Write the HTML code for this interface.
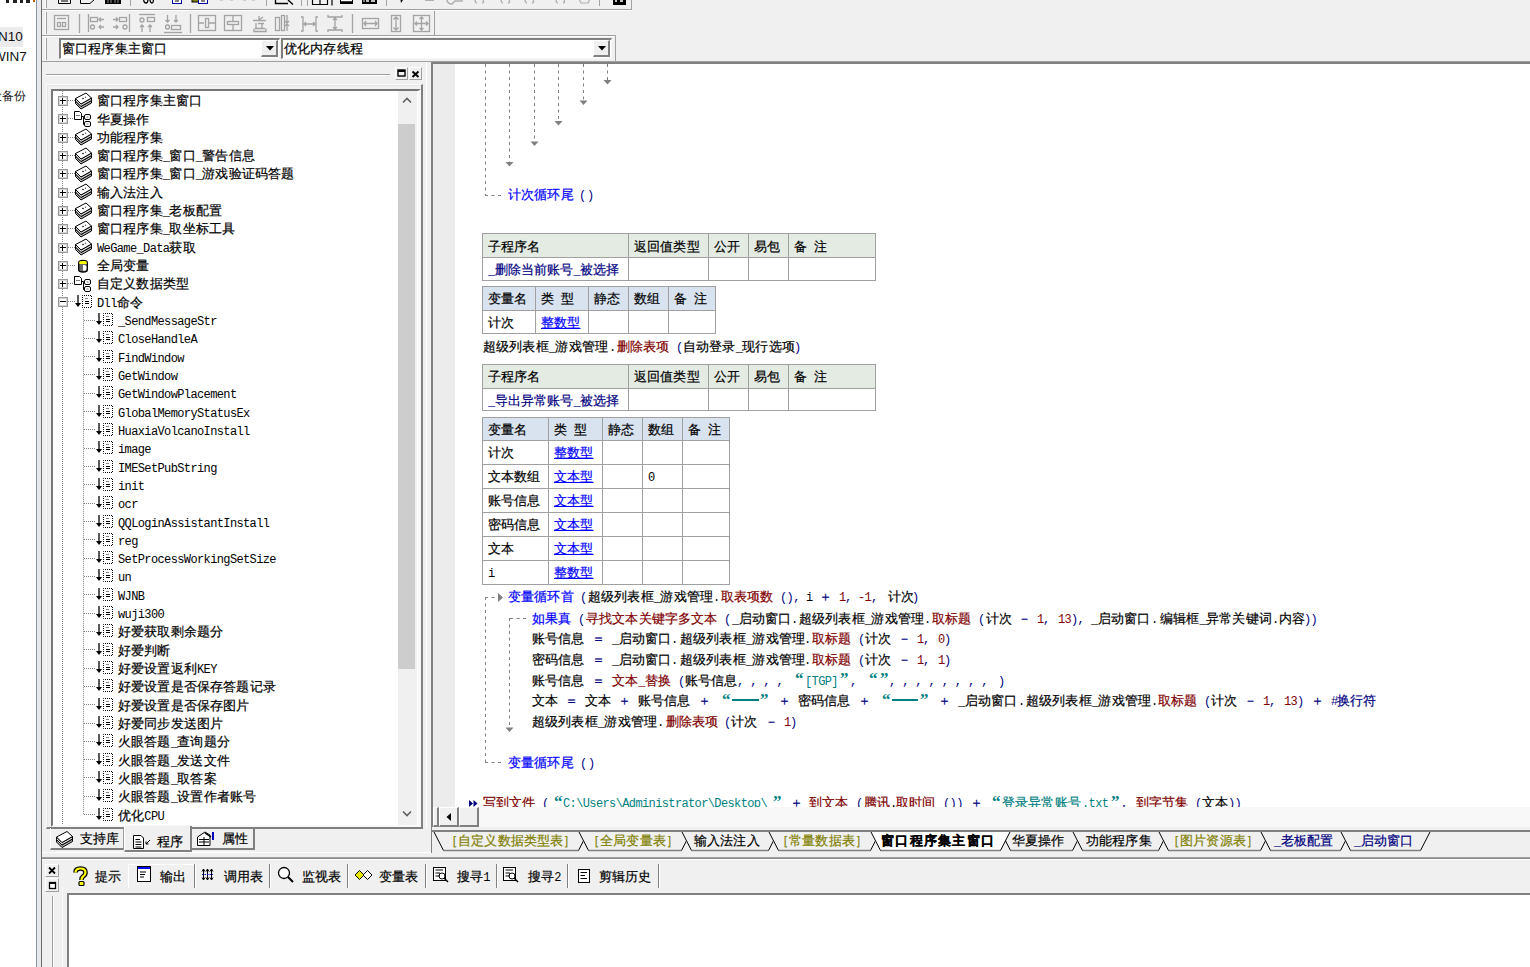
<!DOCTYPE html><html><head><meta charset="utf-8"><style>
*{margin:0;padding:0;box-sizing:border-box}
html,body{width:1530px;height:967px;overflow:hidden;background:#f0f0f0}
body{position:relative;font-family:"Liberation Sans",sans-serif;font-size:13px}
body div{position:absolute}
.t{white-space:pre;line-height:13px;font-size:13px;letter-spacing:0.16px;-webkit-text-stroke:0.2px currentColor}
.t i{font-style:normal;font-family:"Liberation Mono",monospace;font-size:12px;letter-spacing:-0.62px;-webkit-text-stroke:0}
.c{}
svg{position:absolute;overflow:visible}
</style></head><body><div style="left:0px;top:0px;width:36px;height:967px;background:#fff"></div>
<div style="left:0px;top:27px;width:23px;height:20px;background:#ebebeb"></div>
<div style="left:-2px;top:27px;font:13.5px/20px 'Liberation Sans';color:#111">N10</div>
<div style="left:-7px;top:47px;font:13.5px/20px 'Liberation Sans';color:#111">WIN7</div>
<div style="left:-10px;top:90px;font:12px/12px 'Liberation Sans';color:#111">设备份</div>
<div style="left:6px;top:0px;width:3px;height:3px;background:#222"></div>
<div style="left:13px;top:0px;width:4px;height:3px;background:#222"></div>
<div style="left:20px;top:0px;width:3px;height:3px;background:#222"></div>
<div style="left:26px;top:0px;width:4px;height:3px;background:#222"></div>
<div style="left:33px;top:0px;width:2px;height:2px;background:#c06000"></div>
<div style="left:36px;top:0px;width:1px;height:967px;background:#8a94a0"></div>
<div style="left:37px;top:0px;width:4px;height:967px;background:#e6e8eb"></div>
<div style="left:41px;top:0px;width:1px;height:967px;background:#6e6e6e"></div>
<div style="left:42px;top:9px;width:590px;height:1px;background:#a0a0a0"></div>
<div style="left:42px;top:10px;width:590px;height:1px;background:#fff"></div>
<div style="left:631px;top:0px;width:1px;height:10px;background:#a0a0a0"></div>
<div style="left:42px;top:35px;width:574px;height:1px;background:#a0a0a0"></div>
<div style="left:42px;top:36px;width:574px;height:1px;background:#fff"></div>
<div style="left:434px;top:11px;width:1px;height:25px;background:#a0a0a0"></div>
<div style="left:42px;top:61px;width:1488px;height:1px;background:#a0a0a0"></div>
<div style="left:615px;top:36px;width:1px;height:26px;background:#a0a0a0"></div>
<div style="left:45px;top:0px;width:1px;height:8px;background:#fff"></div>
<div style="left:46px;top:0px;width:1px;height:8px;background:#a0a0a0"></div>
<div style="left:45px;top:12px;width:1px;height:22px;background:#fff"></div>
<div style="left:46px;top:12px;width:1px;height:22px;background:#a0a0a0"></div>
<div style="left:45px;top:38px;width:1px;height:22px;background:#fff"></div>
<div style="left:46px;top:38px;width:1px;height:22px;background:#a0a0a0"></div>
<div style="left:59px;top:38px;width:221px;height:21px;background:#fff;border-top:2px solid #808080;border-left:2px solid #808080;border-bottom:1px solid #f8f8f8;border-right:1px solid #f8f8f8"></div>
<div style="left:261px;top:40px;width:17px;height:17px;background:#f0f0f0;border-right:2px solid #808080;border-bottom:2px solid #808080;border-top:1px solid #fff;border-left:1px solid #fff"></div>
<svg style="left:266px;top:46px" width="8" height="5"><path d="M0 0H8L4 4.5Z" fill="#000"/></svg>
<div class="t" style="left:62px;top:42px;color:#000;">窗口程序集主窗口</div>
<div style="left:281px;top:38px;width:331px;height:21px;background:#fff;border-top:2px solid #808080;border-left:2px solid #808080;border-bottom:1px solid #f8f8f8;border-right:1px solid #f8f8f8"></div>
<div style="left:593px;top:40px;width:17px;height:17px;background:#f0f0f0;border-right:2px solid #808080;border-bottom:2px solid #808080;border-top:1px solid #fff;border-left:1px solid #fff"></div>
<svg style="left:598px;top:46px" width="8" height="5"><path d="M0 0H8L4 4.5Z" fill="#000"/></svg>
<div class="t" style="left:284px;top:42px;color:#000;">优化内存线程</div>
<div style="left:46px;top:74px;width:344px;height:1px;background:#a0a0a0"></div>
<div style="left:46px;top:75px;width:344px;height:1px;background:#fff"></div>
<div style="left:395px;top:67px;width:13px;height:13px;border-right:1px solid #a0a0a0;border-bottom:1px solid #a0a0a0;border-top:1px solid #fff;border-left:1px solid #fff"></div>
<div style="left:409px;top:67px;width:13px;height:13px;border-right:1px solid #a0a0a0;border-bottom:1px solid #a0a0a0;border-top:1px solid #fff;border-left:1px solid #fff"></div>
<svg style="left:397px;top:69px" width="9" height="9"><rect x="1" y="1" width="7" height="6" fill="none" stroke="#000" stroke-width="1.4"/><rect x="1" y="1" width="7" height="2" fill="#000"/></svg>
<svg style="left:411px;top:70px" width="9" height="8"><path d="M1.5 1.5L7.5 7M7.5 1.5L1.5 7" stroke="#000" stroke-width="2"/></svg>
<div style="left:46px;top:84px;width:377px;height:745px;border-top:1px solid #fafafa;border-left:1px solid #fafafa;border-right:2px solid #808080;border-bottom:2px solid #808080"></div>
<div style="left:47px;top:85px;width:374px;height:742px;border-top:1px solid #e6e6e6;border-left:1px solid #e6e6e6"></div>
<div style="left:51px;top:89px;width:370px;height:738px;background:#fff;border-top:2px solid #777;border-left:2px solid #777;border-right:3px solid #f8f8f8;border-bottom:2px solid #f8f8f8"></div>
<div style="left:398px;top:91px;width:19px;height:734px;background:#f0f0f0"></div>
<div style="left:398px;top:124px;width:17px;height:545px;background:#cdcdcd"></div>
<svg style="left:402px;top:97px" width="10" height="7"><path d="M1 5.5L5 1.5L9 5.5" fill="none" stroke="#606060" stroke-width="1.6"/></svg>
<svg style="left:402px;top:810px" width="10" height="7"><path d="M1 1.5L5 5.5L9 1.5" fill="none" stroke="#606060" stroke-width="1.6"/></svg>
<div style="left:431px;top:62px;width:1099px;height:765px;background:#fff;border-top:2px solid #808080;border-left:2px solid #808080"></div>
<div style="left:433px;top:64px;width:22px;height:744px;background:#ececec"></div>
<div style="left:433px;top:807px;width:1097px;height:20px;background:#f8f8f8"></div>
<div style="left:433px;top:807px;width:6px;height:20px;background:#f0f0f0;border-left:1px solid #fff;border-right:2px solid #808080;border-bottom:2px solid #808080;border-top:1px solid #fff"></div>
<div style="left:439px;top:807px;width:20px;height:20px;background:#f0f0f0;border-top:1px solid #fff;border-left:1px solid #fff;border-right:2px solid #808080;border-bottom:2px solid #808080"></div>
<div style="left:459px;top:807px;width:20px;height:20px;background:#f0f0f0;border-top:1px solid #fff;border-left:1px solid #fff;border-right:2px solid #808080;border-bottom:2px solid #808080"></div>
<svg style="left:446px;top:813px" width="6" height="9"><path d="M5 0V8L0.5 4Z" fill="#000"/></svg>
<div style="left:431px;top:830px;width:1099px;height:2px;background:#808080"></div>
<div style="left:431px;top:832px;width:1099px;height:20px;background:#f0f0f0"></div>
<div style="left:431px;top:827px;width:1px;height:26px;background:#808080"></div>
<div style="left:431px;top:857px;width:1099px;height:1px;background:#a0a0a0"></div>
<div style="left:42px;top:852px;width:389px;height:1px;background:#fff"></div>
<div style="left:42px;top:857px;width:389px;height:1px;background:#a0a0a0"></div>
<div style="left:67px;top:893px;width:1463px;height:74px;background:#fff;border-top:2px solid #808080;border-left:2px solid #808080"></div>
<div style="left:426px;top:62px;width:1px;height:766px;background:#fff"></div>
<div style="left:54px;top:91px;width:344px;height:733px;overflow:hidden">
<svg style="left:0;top:0" width="344" height="733"><line x1="8.5" y1="0" x2="8.5" y2="733" stroke="#808080" stroke-dasharray="1 1"/><line x1="29.5" y1="218.19800000000004" x2="29.5" y2="724" stroke="#808080" stroke-dasharray="1 1"/><line x1="14" y1="9.5" x2="21" y2="9.5" stroke="#808080" stroke-dasharray="1 1"/><rect x="4.5" y="5.5" width="9" height="9" fill="#fff" stroke="#999"/><rect x="5.5" y="6.5" width="7" height="7" fill="none" stroke="#d4d4d4"/><path d="M6 9.5 H12" stroke="#000"/><path d="M8.5 7 V13" stroke="#000"/><g transform="translate(21,1.5)" stroke="#000" stroke-width="1" stroke-linejoin="round"><path d="M0.5 11 L6 16.5 L16.5 10.5 V8 L6 14 L0.5 8.5Z" fill="#b0b0b0"/><path d="M0.5 8.5 L6 14 L16.5 8 V5.5 L6 11.5 L0.5 6Z" fill="#d8d8d8"/><path d="M0.5 6 L11 0.5 L16.5 5.5 L6 11.5Z" fill="#fff"/><circle cx="8" cy="6" r=".8" fill="#000" stroke="none"/><circle cx="10.5" cy="4.8" r=".7" fill="#555" stroke="none"/></g><line x1="14" y1="27.5" x2="21" y2="27.5" stroke="#808080" stroke-dasharray="1 1"/><rect x="4.5" y="23.5" width="9" height="9" fill="#fff" stroke="#999"/><rect x="5.5" y="24.5" width="7" height="7" fill="none" stroke="#d4d4d4"/><path d="M6 27.5 H12" stroke="#000"/><path d="M8.5 25 V31" stroke="#000"/><g transform="translate(20,20)" stroke="#000" stroke-width="1"><path d="M0.5 0.5H5.5L7.5 2.5V8.5H0.5Z" fill="#fff"/><path d="M2 4.5H6" stroke="#777"/><path d="M7.5 5.5H9.5V13.5H11" fill="none"/><rect x="10.5" y="3.5" width="6" height="5" rx="1.5" fill="#fff"/><rect x="10.5" y="10.5" width="6" height="5" rx="1.5" fill="#fff"/><path d="M12.5 6H14.5M12.5 13H14.5" stroke="#777"/></g><line x1="14" y1="46.5" x2="21" y2="46.5" stroke="#808080" stroke-dasharray="1 1"/><rect x="4.5" y="42.5" width="9" height="9" fill="#fff" stroke="#999"/><rect x="5.5" y="43.5" width="7" height="7" fill="none" stroke="#d4d4d4"/><path d="M6 46.5 H12" stroke="#000"/><path d="M8.5 44 V50" stroke="#000"/><g transform="translate(21,37.5)" stroke="#000" stroke-width="1" stroke-linejoin="round"><path d="M0.5 11 L6 16.5 L16.5 10.5 V8 L6 14 L0.5 8.5Z" fill="#b0b0b0"/><path d="M0.5 8.5 L6 14 L16.5 8 V5.5 L6 11.5 L0.5 6Z" fill="#d8d8d8"/><path d="M0.5 6 L11 0.5 L16.5 5.5 L6 11.5Z" fill="#fff"/><circle cx="8" cy="6" r=".8" fill="#000" stroke="none"/><circle cx="10.5" cy="4.8" r=".7" fill="#555" stroke="none"/></g><line x1="14" y1="64.5" x2="21" y2="64.5" stroke="#808080" stroke-dasharray="1 1"/><rect x="4.5" y="60.5" width="9" height="9" fill="#fff" stroke="#999"/><rect x="5.5" y="61.5" width="7" height="7" fill="none" stroke="#d4d4d4"/><path d="M6 64.5 H12" stroke="#000"/><path d="M8.5 62 V68" stroke="#000"/><g transform="translate(21,56.5)" stroke="#000" stroke-width="1" stroke-linejoin="round"><path d="M0.5 11 L6 16.5 L16.5 10.5 V8 L6 14 L0.5 8.5Z" fill="#b0b0b0"/><path d="M0.5 8.5 L6 14 L16.5 8 V5.5 L6 11.5 L0.5 6Z" fill="#d8d8d8"/><path d="M0.5 6 L11 0.5 L16.5 5.5 L6 11.5Z" fill="#fff"/><circle cx="8" cy="6" r=".8" fill="#000" stroke="none"/><circle cx="10.5" cy="4.8" r=".7" fill="#555" stroke="none"/></g><line x1="14" y1="82.5" x2="21" y2="82.5" stroke="#808080" stroke-dasharray="1 1"/><rect x="4.5" y="78.5" width="9" height="9" fill="#fff" stroke="#999"/><rect x="5.5" y="79.5" width="7" height="7" fill="none" stroke="#d4d4d4"/><path d="M6 82.5 H12" stroke="#000"/><path d="M8.5 80 V86" stroke="#000"/><g transform="translate(21,74.5)" stroke="#000" stroke-width="1" stroke-linejoin="round"><path d="M0.5 11 L6 16.5 L16.5 10.5 V8 L6 14 L0.5 8.5Z" fill="#b0b0b0"/><path d="M0.5 8.5 L6 14 L16.5 8 V5.5 L6 11.5 L0.5 6Z" fill="#d8d8d8"/><path d="M0.5 6 L11 0.5 L16.5 5.5 L6 11.5Z" fill="#fff"/><circle cx="8" cy="6" r=".8" fill="#000" stroke="none"/><circle cx="10.5" cy="4.8" r=".7" fill="#555" stroke="none"/></g><line x1="14" y1="101.5" x2="21" y2="101.5" stroke="#808080" stroke-dasharray="1 1"/><rect x="4.5" y="97.5" width="9" height="9" fill="#fff" stroke="#999"/><rect x="5.5" y="98.5" width="7" height="7" fill="none" stroke="#d4d4d4"/><path d="M6 101.5 H12" stroke="#000"/><path d="M8.5 99 V105" stroke="#000"/><g transform="translate(21,92.5)" stroke="#000" stroke-width="1" stroke-linejoin="round"><path d="M0.5 11 L6 16.5 L16.5 10.5 V8 L6 14 L0.5 8.5Z" fill="#b0b0b0"/><path d="M0.5 8.5 L6 14 L16.5 8 V5.5 L6 11.5 L0.5 6Z" fill="#d8d8d8"/><path d="M0.5 6 L11 0.5 L16.5 5.5 L6 11.5Z" fill="#fff"/><circle cx="8" cy="6" r=".8" fill="#000" stroke="none"/><circle cx="10.5" cy="4.8" r=".7" fill="#555" stroke="none"/></g><line x1="14" y1="119.5" x2="21" y2="119.5" stroke="#808080" stroke-dasharray="1 1"/><rect x="4.5" y="115.5" width="9" height="9" fill="#fff" stroke="#999"/><rect x="5.5" y="116.5" width="7" height="7" fill="none" stroke="#d4d4d4"/><path d="M6 119.5 H12" stroke="#000"/><path d="M8.5 117 V123" stroke="#000"/><g transform="translate(21,111.5)" stroke="#000" stroke-width="1" stroke-linejoin="round"><path d="M0.5 11 L6 16.5 L16.5 10.5 V8 L6 14 L0.5 8.5Z" fill="#b0b0b0"/><path d="M0.5 8.5 L6 14 L16.5 8 V5.5 L6 11.5 L0.5 6Z" fill="#d8d8d8"/><path d="M0.5 6 L11 0.5 L16.5 5.5 L6 11.5Z" fill="#fff"/><circle cx="8" cy="6" r=".8" fill="#000" stroke="none"/><circle cx="10.5" cy="4.8" r=".7" fill="#555" stroke="none"/></g><line x1="14" y1="137.5" x2="21" y2="137.5" stroke="#808080" stroke-dasharray="1 1"/><rect x="4.5" y="133.5" width="9" height="9" fill="#fff" stroke="#999"/><rect x="5.5" y="134.5" width="7" height="7" fill="none" stroke="#d4d4d4"/><path d="M6 137.5 H12" stroke="#000"/><path d="M8.5 135 V141" stroke="#000"/><g transform="translate(21,129.5)" stroke="#000" stroke-width="1" stroke-linejoin="round"><path d="M0.5 11 L6 16.5 L16.5 10.5 V8 L6 14 L0.5 8.5Z" fill="#b0b0b0"/><path d="M0.5 8.5 L6 14 L16.5 8 V5.5 L6 11.5 L0.5 6Z" fill="#d8d8d8"/><path d="M0.5 6 L11 0.5 L16.5 5.5 L6 11.5Z" fill="#fff"/><circle cx="8" cy="6" r=".8" fill="#000" stroke="none"/><circle cx="10.5" cy="4.8" r=".7" fill="#555" stroke="none"/></g><line x1="14" y1="156.5" x2="21" y2="156.5" stroke="#808080" stroke-dasharray="1 1"/><rect x="4.5" y="152.5" width="9" height="9" fill="#fff" stroke="#999"/><rect x="5.5" y="153.5" width="7" height="7" fill="none" stroke="#d4d4d4"/><path d="M6 156.5 H12" stroke="#000"/><path d="M8.5 154 V160" stroke="#000"/><g transform="translate(21,147.5)" stroke="#000" stroke-width="1" stroke-linejoin="round"><path d="M0.5 11 L6 16.5 L16.5 10.5 V8 L6 14 L0.5 8.5Z" fill="#b0b0b0"/><path d="M0.5 8.5 L6 14 L16.5 8 V5.5 L6 11.5 L0.5 6Z" fill="#d8d8d8"/><path d="M0.5 6 L11 0.5 L16.5 5.5 L6 11.5Z" fill="#fff"/><circle cx="8" cy="6" r=".8" fill="#000" stroke="none"/><circle cx="10.5" cy="4.8" r=".7" fill="#555" stroke="none"/></g><line x1="14" y1="174.5" x2="21" y2="174.5" stroke="#808080" stroke-dasharray="1 1"/><rect x="4.5" y="170.5" width="9" height="9" fill="#fff" stroke="#999"/><rect x="5.5" y="171.5" width="7" height="7" fill="none" stroke="#d4d4d4"/><path d="M6 174.5 H12" stroke="#000"/><path d="M8.5 172 V178" stroke="#000"/><g transform="translate(24,169)"><path d="M0.7 2.5Q0.7 0.5 5 0.5Q9.3 0.5 9.3 2.5V10Q9.3 12 5 12Q0.7 12 0.7 10Z" fill="#6a6a6a" stroke="#000" stroke-width="1.3"/><path d="M1.3 2Q1.3 1 5 1Q8.7 1 8.7 2V4H1.3Z" fill="#ffff00"/><path d="M5 5H6.5Q8.5 5 8.5 7.8Q8.5 10.8 6.5 10.8H5Z" fill="#fff"/></g><line x1="14" y1="192.5" x2="21" y2="192.5" stroke="#808080" stroke-dasharray="1 1"/><rect x="4.5" y="188.5" width="9" height="9" fill="#fff" stroke="#999"/><rect x="5.5" y="189.5" width="7" height="7" fill="none" stroke="#d4d4d4"/><path d="M6 192.5 H12" stroke="#000"/><path d="M8.5 190 V196" stroke="#000"/><g transform="translate(20,185)" stroke="#000" stroke-width="1"><path d="M0.5 0.5H5.5L7.5 2.5V8.5H0.5Z" fill="#fff"/><path d="M2 4.5H6" stroke="#777"/><path d="M7.5 5.5H9.5V13.5H11" fill="none"/><rect x="10.5" y="3.5" width="6" height="5" rx="1.5" fill="#fff"/><rect x="10.5" y="10.5" width="6" height="5" rx="1.5" fill="#fff"/><path d="M12.5 6H14.5M12.5 13H14.5" stroke="#777"/></g><line x1="14" y1="210.5" x2="21" y2="210.5" stroke="#808080" stroke-dasharray="1 1"/><rect x="4.5" y="206.5" width="9" height="9" fill="#fff" stroke="#999"/><rect x="5.5" y="207.5" width="7" height="7" fill="none" stroke="#d4d4d4"/><path d="M6 210.5 H12" stroke="#000"/><g transform="translate(21,204)"><path d="M3 0V9" stroke="#000" stroke-width="1.3"/><path d="M0 8H6L3 12Z" fill="#000"/><rect x="7.5" y="0.5" width="9" height="12" fill="#fff" stroke="#000" stroke-dasharray="1 1" stroke-dashoffset=".5"/><path d="M10 3.5H13" stroke="#888"/><path d="M10 6.5H14M10 8.5H14" stroke="#000"/></g><line x1="30" y1="229.5" x2="42" y2="229.5" stroke="#808080" stroke-dasharray="1 1"/><g transform="translate(42,222)"><path d="M3 0V9" stroke="#000" stroke-width="1.3"/><path d="M0 8H6L3 12Z" fill="#000"/><rect x="7.5" y="0.5" width="9" height="12" fill="#fff" stroke="#000" stroke-dasharray="1 1" stroke-dashoffset=".5"/><path d="M10 3.5H13" stroke="#888"/><path d="M10 6.5H14M10 8.5H14" stroke="#000"/></g><line x1="30" y1="247.5" x2="42" y2="247.5" stroke="#808080" stroke-dasharray="1 1"/><g transform="translate(42,240)"><path d="M3 0V9" stroke="#000" stroke-width="1.3"/><path d="M0 8H6L3 12Z" fill="#000"/><rect x="7.5" y="0.5" width="9" height="12" fill="#fff" stroke="#000" stroke-dasharray="1 1" stroke-dashoffset=".5"/><path d="M10 3.5H13" stroke="#888"/><path d="M10 6.5H14M10 8.5H14" stroke="#000"/></g><line x1="30" y1="265.5" x2="42" y2="265.5" stroke="#808080" stroke-dasharray="1 1"/><g transform="translate(42,259)"><path d="M3 0V9" stroke="#000" stroke-width="1.3"/><path d="M0 8H6L3 12Z" fill="#000"/><rect x="7.5" y="0.5" width="9" height="12" fill="#fff" stroke="#000" stroke-dasharray="1 1" stroke-dashoffset=".5"/><path d="M10 3.5H13" stroke="#888"/><path d="M10 6.5H14M10 8.5H14" stroke="#000"/></g><line x1="30" y1="283.5" x2="42" y2="283.5" stroke="#808080" stroke-dasharray="1 1"/><g transform="translate(42,277)"><path d="M3 0V9" stroke="#000" stroke-width="1.3"/><path d="M0 8H6L3 12Z" fill="#000"/><rect x="7.5" y="0.5" width="9" height="12" fill="#fff" stroke="#000" stroke-dasharray="1 1" stroke-dashoffset=".5"/><path d="M10 3.5H13" stroke="#888"/><path d="M10 6.5H14M10 8.5H14" stroke="#000"/></g><line x1="30" y1="302.5" x2="42" y2="302.5" stroke="#808080" stroke-dasharray="1 1"/><g transform="translate(42,295)"><path d="M3 0V9" stroke="#000" stroke-width="1.3"/><path d="M0 8H6L3 12Z" fill="#000"/><rect x="7.5" y="0.5" width="9" height="12" fill="#fff" stroke="#000" stroke-dasharray="1 1" stroke-dashoffset=".5"/><path d="M10 3.5H13" stroke="#888"/><path d="M10 6.5H14M10 8.5H14" stroke="#000"/></g><line x1="30" y1="320.5" x2="42" y2="320.5" stroke="#808080" stroke-dasharray="1 1"/><g transform="translate(42,314)"><path d="M3 0V9" stroke="#000" stroke-width="1.3"/><path d="M0 8H6L3 12Z" fill="#000"/><rect x="7.5" y="0.5" width="9" height="12" fill="#fff" stroke="#000" stroke-dasharray="1 1" stroke-dashoffset=".5"/><path d="M10 3.5H13" stroke="#888"/><path d="M10 6.5H14M10 8.5H14" stroke="#000"/></g><line x1="30" y1="338.5" x2="42" y2="338.5" stroke="#808080" stroke-dasharray="1 1"/><g transform="translate(42,332)"><path d="M3 0V9" stroke="#000" stroke-width="1.3"/><path d="M0 8H6L3 12Z" fill="#000"/><rect x="7.5" y="0.5" width="9" height="12" fill="#fff" stroke="#000" stroke-dasharray="1 1" stroke-dashoffset=".5"/><path d="M10 3.5H13" stroke="#888"/><path d="M10 6.5H14M10 8.5H14" stroke="#000"/></g><line x1="30" y1="357.5" x2="42" y2="357.5" stroke="#808080" stroke-dasharray="1 1"/><g transform="translate(42,350)"><path d="M3 0V9" stroke="#000" stroke-width="1.3"/><path d="M0 8H6L3 12Z" fill="#000"/><rect x="7.5" y="0.5" width="9" height="12" fill="#fff" stroke="#000" stroke-dasharray="1 1" stroke-dashoffset=".5"/><path d="M10 3.5H13" stroke="#888"/><path d="M10 6.5H14M10 8.5H14" stroke="#000"/></g><line x1="30" y1="375.5" x2="42" y2="375.5" stroke="#808080" stroke-dasharray="1 1"/><g transform="translate(42,369)"><path d="M3 0V9" stroke="#000" stroke-width="1.3"/><path d="M0 8H6L3 12Z" fill="#000"/><rect x="7.5" y="0.5" width="9" height="12" fill="#fff" stroke="#000" stroke-dasharray="1 1" stroke-dashoffset=".5"/><path d="M10 3.5H13" stroke="#888"/><path d="M10 6.5H14M10 8.5H14" stroke="#000"/></g><line x1="30" y1="393.5" x2="42" y2="393.5" stroke="#808080" stroke-dasharray="1 1"/><g transform="translate(42,387)"><path d="M3 0V9" stroke="#000" stroke-width="1.3"/><path d="M0 8H6L3 12Z" fill="#000"/><rect x="7.5" y="0.5" width="9" height="12" fill="#fff" stroke="#000" stroke-dasharray="1 1" stroke-dashoffset=".5"/><path d="M10 3.5H13" stroke="#888"/><path d="M10 6.5H14M10 8.5H14" stroke="#000"/></g><line x1="30" y1="412.5" x2="42" y2="412.5" stroke="#808080" stroke-dasharray="1 1"/><g transform="translate(42,405)"><path d="M3 0V9" stroke="#000" stroke-width="1.3"/><path d="M0 8H6L3 12Z" fill="#000"/><rect x="7.5" y="0.5" width="9" height="12" fill="#fff" stroke="#000" stroke-dasharray="1 1" stroke-dashoffset=".5"/><path d="M10 3.5H13" stroke="#888"/><path d="M10 6.5H14M10 8.5H14" stroke="#000"/></g><line x1="30" y1="430.5" x2="42" y2="430.5" stroke="#808080" stroke-dasharray="1 1"/><g transform="translate(42,424)"><path d="M3 0V9" stroke="#000" stroke-width="1.3"/><path d="M0 8H6L3 12Z" fill="#000"/><rect x="7.5" y="0.5" width="9" height="12" fill="#fff" stroke="#000" stroke-dasharray="1 1" stroke-dashoffset=".5"/><path d="M10 3.5H13" stroke="#888"/><path d="M10 6.5H14M10 8.5H14" stroke="#000"/></g><line x1="30" y1="448.5" x2="42" y2="448.5" stroke="#808080" stroke-dasharray="1 1"/><g transform="translate(42,442)"><path d="M3 0V9" stroke="#000" stroke-width="1.3"/><path d="M0 8H6L3 12Z" fill="#000"/><rect x="7.5" y="0.5" width="9" height="12" fill="#fff" stroke="#000" stroke-dasharray="1 1" stroke-dashoffset=".5"/><path d="M10 3.5H13" stroke="#888"/><path d="M10 6.5H14M10 8.5H14" stroke="#000"/></g><line x1="30" y1="467.5" x2="42" y2="467.5" stroke="#808080" stroke-dasharray="1 1"/><g transform="translate(42,460)"><path d="M3 0V9" stroke="#000" stroke-width="1.3"/><path d="M0 8H6L3 12Z" fill="#000"/><rect x="7.5" y="0.5" width="9" height="12" fill="#fff" stroke="#000" stroke-dasharray="1 1" stroke-dashoffset=".5"/><path d="M10 3.5H13" stroke="#888"/><path d="M10 6.5H14M10 8.5H14" stroke="#000"/></g><line x1="30" y1="485.5" x2="42" y2="485.5" stroke="#808080" stroke-dasharray="1 1"/><g transform="translate(42,478)"><path d="M3 0V9" stroke="#000" stroke-width="1.3"/><path d="M0 8H6L3 12Z" fill="#000"/><rect x="7.5" y="0.5" width="9" height="12" fill="#fff" stroke="#000" stroke-dasharray="1 1" stroke-dashoffset=".5"/><path d="M10 3.5H13" stroke="#888"/><path d="M10 6.5H14M10 8.5H14" stroke="#000"/></g><line x1="30" y1="503.5" x2="42" y2="503.5" stroke="#808080" stroke-dasharray="1 1"/><g transform="translate(42,497)"><path d="M3 0V9" stroke="#000" stroke-width="1.3"/><path d="M0 8H6L3 12Z" fill="#000"/><rect x="7.5" y="0.5" width="9" height="12" fill="#fff" stroke="#000" stroke-dasharray="1 1" stroke-dashoffset=".5"/><path d="M10 3.5H13" stroke="#888"/><path d="M10 6.5H14M10 8.5H14" stroke="#000"/></g><line x1="30" y1="522.5" x2="42" y2="522.5" stroke="#808080" stroke-dasharray="1 1"/><g transform="translate(42,515)"><path d="M3 0V9" stroke="#000" stroke-width="1.3"/><path d="M0 8H6L3 12Z" fill="#000"/><rect x="7.5" y="0.5" width="9" height="12" fill="#fff" stroke="#000" stroke-dasharray="1 1" stroke-dashoffset=".5"/><path d="M10 3.5H13" stroke="#888"/><path d="M10 6.5H14M10 8.5H14" stroke="#000"/></g><line x1="30" y1="540.5" x2="42" y2="540.5" stroke="#808080" stroke-dasharray="1 1"/><g transform="translate(42,533)"><path d="M3 0V9" stroke="#000" stroke-width="1.3"/><path d="M0 8H6L3 12Z" fill="#000"/><rect x="7.5" y="0.5" width="9" height="12" fill="#fff" stroke="#000" stroke-dasharray="1 1" stroke-dashoffset=".5"/><path d="M10 3.5H13" stroke="#888"/><path d="M10 6.5H14M10 8.5H14" stroke="#000"/></g><line x1="30" y1="558.5" x2="42" y2="558.5" stroke="#808080" stroke-dasharray="1 1"/><g transform="translate(42,552)"><path d="M3 0V9" stroke="#000" stroke-width="1.3"/><path d="M0 8H6L3 12Z" fill="#000"/><rect x="7.5" y="0.5" width="9" height="12" fill="#fff" stroke="#000" stroke-dasharray="1 1" stroke-dashoffset=".5"/><path d="M10 3.5H13" stroke="#888"/><path d="M10 6.5H14M10 8.5H14" stroke="#000"/></g><line x1="30" y1="577.5" x2="42" y2="577.5" stroke="#808080" stroke-dasharray="1 1"/><g transform="translate(42,570)"><path d="M3 0V9" stroke="#000" stroke-width="1.3"/><path d="M0 8H6L3 12Z" fill="#000"/><rect x="7.5" y="0.5" width="9" height="12" fill="#fff" stroke="#000" stroke-dasharray="1 1" stroke-dashoffset=".5"/><path d="M10 3.5H13" stroke="#888"/><path d="M10 6.5H14M10 8.5H14" stroke="#000"/></g><line x1="30" y1="595.5" x2="42" y2="595.5" stroke="#808080" stroke-dasharray="1 1"/><g transform="translate(42,588)"><path d="M3 0V9" stroke="#000" stroke-width="1.3"/><path d="M0 8H6L3 12Z" fill="#000"/><rect x="7.5" y="0.5" width="9" height="12" fill="#fff" stroke="#000" stroke-dasharray="1 1" stroke-dashoffset=".5"/><path d="M10 3.5H13" stroke="#888"/><path d="M10 6.5H14M10 8.5H14" stroke="#000"/></g><line x1="30" y1="613.5" x2="42" y2="613.5" stroke="#808080" stroke-dasharray="1 1"/><g transform="translate(42,607)"><path d="M3 0V9" stroke="#000" stroke-width="1.3"/><path d="M0 8H6L3 12Z" fill="#000"/><rect x="7.5" y="0.5" width="9" height="12" fill="#fff" stroke="#000" stroke-dasharray="1 1" stroke-dashoffset=".5"/><path d="M10 3.5H13" stroke="#888"/><path d="M10 6.5H14M10 8.5H14" stroke="#000"/></g><line x1="30" y1="632.5" x2="42" y2="632.5" stroke="#808080" stroke-dasharray="1 1"/><g transform="translate(42,625)"><path d="M3 0V9" stroke="#000" stroke-width="1.3"/><path d="M0 8H6L3 12Z" fill="#000"/><rect x="7.5" y="0.5" width="9" height="12" fill="#fff" stroke="#000" stroke-dasharray="1 1" stroke-dashoffset=".5"/><path d="M10 3.5H13" stroke="#888"/><path d="M10 6.5H14M10 8.5H14" stroke="#000"/></g><line x1="30" y1="650.5" x2="42" y2="650.5" stroke="#808080" stroke-dasharray="1 1"/><g transform="translate(42,643)"><path d="M3 0V9" stroke="#000" stroke-width="1.3"/><path d="M0 8H6L3 12Z" fill="#000"/><rect x="7.5" y="0.5" width="9" height="12" fill="#fff" stroke="#000" stroke-dasharray="1 1" stroke-dashoffset=".5"/><path d="M10 3.5H13" stroke="#888"/><path d="M10 6.5H14M10 8.5H14" stroke="#000"/></g><line x1="30" y1="668.5" x2="42" y2="668.5" stroke="#808080" stroke-dasharray="1 1"/><g transform="translate(42,662)"><path d="M3 0V9" stroke="#000" stroke-width="1.3"/><path d="M0 8H6L3 12Z" fill="#000"/><rect x="7.5" y="0.5" width="9" height="12" fill="#fff" stroke="#000" stroke-dasharray="1 1" stroke-dashoffset=".5"/><path d="M10 3.5H13" stroke="#888"/><path d="M10 6.5H14M10 8.5H14" stroke="#000"/></g><line x1="30" y1="686.5" x2="42" y2="686.5" stroke="#808080" stroke-dasharray="1 1"/><g transform="translate(42,680)"><path d="M3 0V9" stroke="#000" stroke-width="1.3"/><path d="M0 8H6L3 12Z" fill="#000"/><rect x="7.5" y="0.5" width="9" height="12" fill="#fff" stroke="#000" stroke-dasharray="1 1" stroke-dashoffset=".5"/><path d="M10 3.5H13" stroke="#888"/><path d="M10 6.5H14M10 8.5H14" stroke="#000"/></g><line x1="30" y1="705.5" x2="42" y2="705.5" stroke="#808080" stroke-dasharray="1 1"/><g transform="translate(42,698)"><path d="M3 0V9" stroke="#000" stroke-width="1.3"/><path d="M0 8H6L3 12Z" fill="#000"/><rect x="7.5" y="0.5" width="9" height="12" fill="#fff" stroke="#000" stroke-dasharray="1 1" stroke-dashoffset=".5"/><path d="M10 3.5H13" stroke="#888"/><path d="M10 6.5H14M10 8.5H14" stroke="#000"/></g><line x1="30" y1="723.5" x2="42" y2="723.5" stroke="#808080" stroke-dasharray="1 1"/><g transform="translate(42,717)"><path d="M3 0V9" stroke="#000" stroke-width="1.3"/><path d="M0 8H6L3 12Z" fill="#000"/><rect x="7.5" y="0.5" width="9" height="12" fill="#fff" stroke="#000" stroke-dasharray="1 1" stroke-dashoffset=".5"/><path d="M10 3.5H13" stroke="#888"/><path d="M10 6.5H14M10 8.5H14" stroke="#000"/></g></svg>
<div class="t" style="left:43px;top:3px;color:#000;">窗口程序集主窗口</div>
<div class="t" style="left:43px;top:22px;color:#000;">华夏操作</div>
<div class="t" style="left:43px;top:40px;color:#000;">功能程序集</div>
<div class="t" style="left:43px;top:58px;color:#000;">窗口程序集<i>_</i>窗口<i>_</i>警告信息</div>
<div class="t" style="left:43px;top:76px;color:#000;">窗口程序集<i>_</i>窗口<i>_</i>游戏验证码答题</div>
<div class="t" style="left:43px;top:95px;color:#000;">输入法注入</div>
<div class="t" style="left:43px;top:113px;color:#000;">窗口程序集<i>_</i>老板配置</div>
<div class="t" style="left:43px;top:131px;color:#000;">窗口程序集<i>_</i>取坐标工具</div>
<div class="t" style="left:43px;top:150px;color:#000;"><i>WeGame_Data</i>获取</div>
<div class="t" style="left:43px;top:168px;color:#000;">全局变量</div>
<div class="t" style="left:43px;top:186px;color:#000;">自定义数据类型</div>
<div class="t" style="left:43px;top:205px;color:#000;"><i>Dll</i>命令</div>
<div class="t" style="left:64px;top:223px;color:#000;"><i>_SendMessageStr</i></div>
<div class="t" style="left:64px;top:241px;color:#000;"><i>CloseHandleA</i></div>
<div class="t" style="left:64px;top:260px;color:#000;"><i>FindWindow</i></div>
<div class="t" style="left:64px;top:278px;color:#000;"><i>GetWindow</i></div>
<div class="t" style="left:64px;top:296px;color:#000;"><i>GetWindowPlacement</i></div>
<div class="t" style="left:64px;top:315px;color:#000;"><i>GlobalMemoryStatusEx</i></div>
<div class="t" style="left:64px;top:333px;color:#000;"><i>HuaxiaVolcanoInstall</i></div>
<div class="t" style="left:64px;top:351px;color:#000;"><i>image</i></div>
<div class="t" style="left:64px;top:370px;color:#000;"><i>IMESetPubString</i></div>
<div class="t" style="left:64px;top:388px;color:#000;"><i>init</i></div>
<div class="t" style="left:64px;top:406px;color:#000;"><i>ocr</i></div>
<div class="t" style="left:64px;top:425px;color:#000;"><i>QQLoginAssistantInstall</i></div>
<div class="t" style="left:64px;top:443px;color:#000;"><i>reg</i></div>
<div class="t" style="left:64px;top:461px;color:#000;"><i>SetProcessWorkingSetSize</i></div>
<div class="t" style="left:64px;top:479px;color:#000;"><i>un</i></div>
<div class="t" style="left:64px;top:498px;color:#000;"><i>WJNB</i></div>
<div class="t" style="left:64px;top:516px;color:#000;"><i>wuji300</i></div>
<div class="t" style="left:64px;top:534px;color:#000;">好爱获取剩余题分</div>
<div class="t" style="left:64px;top:553px;color:#000;">好爱判断</div>
<div class="t" style="left:64px;top:571px;color:#000;">好爱设置返利<i>KEY</i></div>
<div class="t" style="left:64px;top:589px;color:#000;">好爱设置是否保存答题记录</div>
<div class="t" style="left:64px;top:608px;color:#000;">好爱设置是否保存图片</div>
<div class="t" style="left:64px;top:626px;color:#000;">好爱同步发送图片</div>
<div class="t" style="left:64px;top:644px;color:#000;">火眼答题<i>_</i>查询题分</div>
<div class="t" style="left:64px;top:663px;color:#000;">火眼答题<i>_</i>发送文件</div>
<div class="t" style="left:64px;top:681px;color:#000;">火眼答题<i>_</i>取答案</div>
<div class="t" style="left:64px;top:699px;color:#000;">火眼答题<i>_</i>设置作者账号</div>
<div class="t" style="left:64px;top:718px;color:#000;">优化<i>CPU</i></div>
</div>
<div style="left:455px;top:64px;width:1075px;height:743px;overflow:hidden">
<div style="left:-455px;top:-64px;width:1530px;height:967px">
<svg style="left:0;top:0" width="1530" height="967"><line x1="607.5" y1="64" x2="607.5" y2="80.5" stroke="#808080" stroke-dasharray="3 3.5"/><path d="M603.5 80.0H611.5L607.5 84.5Z" fill="#808080"/><line x1="583.5" y1="64" x2="583.5" y2="101" stroke="#808080" stroke-dasharray="3 3.5"/><path d="M579.5 100.5H587.5L583.5 105Z" fill="#808080"/><line x1="558.5" y1="64" x2="558.5" y2="121.5" stroke="#808080" stroke-dasharray="3 3.5"/><path d="M554.5 121.0H562.5L558.5 125.5Z" fill="#808080"/><line x1="534.5" y1="64" x2="534.5" y2="142" stroke="#808080" stroke-dasharray="3 3.5"/><path d="M530.5 141.5H538.5L534.5 146Z" fill="#808080"/><line x1="509.5" y1="64" x2="509.5" y2="162.5" stroke="#808080" stroke-dasharray="3 3.5"/><path d="M505.5 162.0H513.5L509.5 166.5Z" fill="#808080"/><line x1="485.5" y1="64" x2="485.5" y2="195" stroke="#808080" stroke-dasharray="3 3.5"/><line x1="485" y1="195.5" x2="502" y2="195.5" stroke="#808080" stroke-dasharray="3 3.5"/><line x1="485" y1="597.5" x2="496" y2="597.5" stroke="#808080" stroke-dasharray="3 3.5"/><path d="M498 593V602L503 597.5Z" fill="#808080"/><line x1="485.5" y1="597" x2="485.5" y2="762" stroke="#808080" stroke-dasharray="3 3.5"/><line x1="485" y1="762.5" x2="502" y2="762.5" stroke="#808080" stroke-dasharray="3 3.5"/><line x1="510" y1="618.5" x2="527" y2="618.5" stroke="#808080" stroke-dasharray="3 3.5"/><line x1="509.5" y1="618" x2="509.5" y2="727" stroke="#808080" stroke-dasharray="3 3.5"/><path d="M505.5 727.5H513.5L509.5 732Z" fill="#808080"/></svg>
<div class="t c" style="left:508px;top:188px;color:#0000ff">计次循环尾</div>
<div class="t c" style="left:579px;top:188px;color:#000080"><i>(</i></div>
<div class="t c" style="left:587px;top:188px;color:#000080"><i>)</i></div>
<div style="left:482px;top:233px;width:393px;height:24px;background:#e4ebe3"></div>
<div style="left:482px;top:233px;width:1px;height:48px;background:#a0a0a0"></div>
<div style="left:628px;top:233px;width:1px;height:48px;background:#a0a0a0"></div>
<div style="left:708px;top:233px;width:1px;height:48px;background:#a0a0a0"></div>
<div style="left:748px;top:233px;width:1px;height:48px;background:#a0a0a0"></div>
<div style="left:788px;top:233px;width:1px;height:48px;background:#a0a0a0"></div>
<div style="left:875px;top:233px;width:1px;height:48px;background:#a0a0a0"></div>
<div style="left:482px;top:233px;width:394px;height:1px;background:#a0a0a0"></div>
<div style="left:482px;top:257px;width:394px;height:1px;background:#a0a0a0"></div>
<div style="left:482px;top:280px;width:394px;height:1px;background:#a0a0a0"></div>
<div class="t c" style="left:488px;top:240px;color:#000;">子程序名</div>
<div class="t c" style="left:634px;top:240px;color:#000;">返回值类型</div>
<div class="t c" style="left:714px;top:240px;color:#000;">公开</div>
<div class="t c" style="left:754px;top:240px;color:#000;">易包</div>
<div class="t c" style="left:794px;top:240px;color:#000;">备<i> </i>注</div>
<div class="t c" style="left:488px;top:263px;color:#000080;"><i>_</i>删除当前账号<i>_</i>被选择</div>
<div style="left:482px;top:286px;width:233px;height:24px;background:#d9e3f0"></div>
<div style="left:482px;top:286px;width:1px;height:48px;background:#a0a0a0"></div>
<div style="left:535px;top:286px;width:1px;height:48px;background:#a0a0a0"></div>
<div style="left:588px;top:286px;width:1px;height:48px;background:#a0a0a0"></div>
<div style="left:628px;top:286px;width:1px;height:48px;background:#a0a0a0"></div>
<div style="left:668px;top:286px;width:1px;height:48px;background:#a0a0a0"></div>
<div style="left:715px;top:286px;width:1px;height:48px;background:#a0a0a0"></div>
<div style="left:482px;top:286px;width:234px;height:1px;background:#a0a0a0"></div>
<div style="left:482px;top:310px;width:234px;height:1px;background:#a0a0a0"></div>
<div style="left:482px;top:333px;width:234px;height:1px;background:#a0a0a0"></div>
<div class="t c" style="left:488px;top:292px;color:#000;">变量名</div>
<div class="t c" style="left:541px;top:292px;color:#000;">类<i> </i>型</div>
<div class="t c" style="left:594px;top:292px;color:#000;">静态</div>
<div class="t c" style="left:634px;top:292px;color:#000;">数组</div>
<div class="t c" style="left:674px;top:292px;color:#000;">备<i> </i>注</div>
<div class="t c" style="left:488px;top:316px;color:#000;">计次</div>
<div class="t c" style="left:541px;top:316px;color:#0000ff;text-decoration:underline;text-underline-offset:1px">整数型</div>
<div class="t c" style="left:483px;top:340px;color:#000">超级列表框<i>_</i>游戏管理</div>
<div class="t c" style="left:609px;top:340px;color:#000"><i>.</i></div>
<div class="t c" style="left:617px;top:340px;color:#800000">删除表项</div>
<div class="t c" style="left:676px;top:340px;color:#000080"><i>(</i></div>
<div class="t c" style="left:683px;top:340px;color:#000">自动登录<i>_</i>现行选项</div>
<div class="t c" style="left:794px;top:340px;color:#000080"><i>)</i></div>
<div style="left:482px;top:364px;width:393px;height:24px;background:#e4ebe3"></div>
<div style="left:482px;top:364px;width:1px;height:47px;background:#a0a0a0"></div>
<div style="left:628px;top:364px;width:1px;height:47px;background:#a0a0a0"></div>
<div style="left:708px;top:364px;width:1px;height:47px;background:#a0a0a0"></div>
<div style="left:748px;top:364px;width:1px;height:47px;background:#a0a0a0"></div>
<div style="left:788px;top:364px;width:1px;height:47px;background:#a0a0a0"></div>
<div style="left:875px;top:364px;width:1px;height:47px;background:#a0a0a0"></div>
<div style="left:482px;top:364px;width:394px;height:1px;background:#a0a0a0"></div>
<div style="left:482px;top:388px;width:394px;height:1px;background:#a0a0a0"></div>
<div style="left:482px;top:410px;width:394px;height:1px;background:#a0a0a0"></div>
<div class="t c" style="left:488px;top:370px;color:#000;">子程序名</div>
<div class="t c" style="left:634px;top:370px;color:#000;">返回值类型</div>
<div class="t c" style="left:714px;top:370px;color:#000;">公开</div>
<div class="t c" style="left:754px;top:370px;color:#000;">易包</div>
<div class="t c" style="left:794px;top:370px;color:#000;">备<i> </i>注</div>
<div class="t c" style="left:488px;top:394px;color:#000080;"><i>_</i>导出异常账号<i>_</i>被选择</div>
<div style="left:482px;top:417px;width:247px;height:23px;background:#d9e3f0"></div>
<div style="left:482px;top:417px;width:1px;height:168px;background:#a0a0a0"></div>
<div style="left:548px;top:417px;width:1px;height:168px;background:#a0a0a0"></div>
<div style="left:602px;top:417px;width:1px;height:168px;background:#a0a0a0"></div>
<div style="left:642px;top:417px;width:1px;height:168px;background:#a0a0a0"></div>
<div style="left:682px;top:417px;width:1px;height:168px;background:#a0a0a0"></div>
<div style="left:729px;top:417px;width:1px;height:168px;background:#a0a0a0"></div>
<div style="left:482px;top:417px;width:248px;height:1px;background:#a0a0a0"></div>
<div style="left:482px;top:440px;width:248px;height:1px;background:#a0a0a0"></div>
<div style="left:482px;top:464px;width:248px;height:1px;background:#a0a0a0"></div>
<div style="left:482px;top:488px;width:248px;height:1px;background:#a0a0a0"></div>
<div style="left:482px;top:512px;width:248px;height:1px;background:#a0a0a0"></div>
<div style="left:482px;top:536px;width:248px;height:1px;background:#a0a0a0"></div>
<div style="left:482px;top:560px;width:248px;height:1px;background:#a0a0a0"></div>
<div style="left:482px;top:584px;width:248px;height:1px;background:#a0a0a0"></div>
<div class="t c" style="left:488px;top:423px;color:#000;">变量名</div>
<div class="t c" style="left:554px;top:423px;color:#000;">类<i> </i>型</div>
<div class="t c" style="left:608px;top:423px;color:#000;">静态</div>
<div class="t c" style="left:648px;top:423px;color:#000;">数组</div>
<div class="t c" style="left:688px;top:423px;color:#000;">备<i> </i>注</div>
<div class="t c" style="left:488px;top:446px;color:#000;">计次</div>
<div class="t c" style="left:554px;top:446px;color:#0000ff;text-decoration:underline;text-underline-offset:1px">整数型</div>
<div class="t c" style="left:488px;top:470px;color:#000;">文本数组</div>
<div class="t c" style="left:554px;top:470px;color:#0000ff;text-decoration:underline;text-underline-offset:1px">文本型</div>
<div class="t c" style="left:488px;top:494px;color:#000;">账号信息</div>
<div class="t c" style="left:554px;top:494px;color:#0000ff;text-decoration:underline;text-underline-offset:1px">文本型</div>
<div class="t c" style="left:488px;top:518px;color:#000;">密码信息</div>
<div class="t c" style="left:554px;top:518px;color:#0000ff;text-decoration:underline;text-underline-offset:1px">文本型</div>
<div class="t c" style="left:488px;top:542px;color:#000;">文本</div>
<div class="t c" style="left:554px;top:542px;color:#0000ff;text-decoration:underline;text-underline-offset:1px">文本型</div>
<div class="t c" style="left:488px;top:566px;color:#000;"><i>i</i></div>
<div class="t c" style="left:554px;top:566px;color:#0000ff;text-decoration:underline;text-underline-offset:1px">整数型</div>
<div class="t c" style="left:648px;top:470px;color:#000;"><i>0</i></div>
<div class="t c" style="left:508px;top:590px;color:#0000ff">变量循环首</div>
<div class="t c" style="left:580px;top:590px;color:#000080"><i>(</i></div>
<div class="t c" style="left:588px;top:590px;color:#000">超级列表框<i>_</i>游戏管理</div>
<div class="t c" style="left:713px;top:590px;color:#000"><i>.</i></div>
<div class="t c" style="left:721px;top:590px;color:#800000">取表项数</div>
<div class="t c" style="left:780px;top:590px;color:#000080"><i>(),</i></div>
<div class="t c" style="left:806px;top:590px;color:#000"><i>i</i></div>
<div class="t c" style="left:819px;top:590px;color:#000080">＋</div>
<div class="t c" style="left:839px;top:590px;color:#800000"><i>1</i></div>
<div class="t c" style="left:845px;top:590px;color:#000080"><i>,</i></div>
<div class="t c" style="left:858px;top:590px;color:#800000"><i>-1</i></div>
<div class="t c" style="left:871px;top:590px;color:#000080"><i>,</i></div>
<div class="t c" style="left:888px;top:590px;color:#000">计次</div>
<div class="t c" style="left:912px;top:590px;color:#000080"><i>)</i></div>
<div class="t c" style="left:532px;top:612px;color:#0000ff">如果真</div>
<div class="t c" style="left:578px;top:612px;color:#000080"><i>(</i></div>
<div class="t c" style="left:586px;top:612px;color:#800000">寻找文本关键字多文本</div>
<div class="t c" style="left:724px;top:612px;color:#000080"><i>(</i></div>
<div class="t c" style="left:732px;top:612px;color:#000"><i>_</i>启动窗口</div>
<div class="t c" style="left:791px;top:612px;color:#000"><i>.</i></div>
<div class="t c" style="left:799px;top:612px;color:#000">超级列表框<i>_</i>游戏管理</div>
<div class="t c" style="left:924px;top:612px;color:#000"><i>.</i></div>
<div class="t c" style="left:932px;top:612px;color:#800000">取标题</div>
<div class="t c" style="left:978px;top:612px;color:#000080"><i>(</i></div>
<div class="t c" style="left:986px;top:612px;color:#000">计次</div>
<div class="t c" style="left:1018px;top:612px;color:#000080">－</div>
<div class="t c" style="left:1037px;top:612px;color:#800000"><i>1</i></div>
<div class="t c" style="left:1043px;top:612px;color:#000080"><i>,</i></div>
<div class="t c" style="left:1058px;top:612px;color:#800000"><i>13</i></div>
<div class="t c" style="left:1071px;top:612px;color:#000080"><i>),</i></div>
<div class="t c" style="left:1091px;top:612px;color:#000"><i>_</i>启动窗口</div>
<div class="t c" style="left:1151px;top:612px;color:#000"><i>.</i></div>
<div class="t c" style="left:1160px;top:612px;color:#000">编辑框<i>_</i>异常关键词</div>
<div class="t c" style="left:1272px;top:612px;color:#000"><i>.</i></div>
<div class="t c" style="left:1279px;top:612px;color:#000">内容</div>
<div class="t c" style="left:1304px;top:612px;color:#000080"><i>))</i></div>
<div class="t c" style="left:532px;top:632px;color:#000">账号信息</div>
<div class="t c" style="left:592px;top:632px;color:#000080">＝</div>
<div class="t c" style="left:612px;top:632px;color:#000"><i>_</i>启动窗口</div>
<div class="t c" style="left:671px;top:632px;color:#000"><i>.</i></div>
<div class="t c" style="left:680px;top:632px;color:#000">超级列表框<i>_</i>游戏管理</div>
<div class="t c" style="left:804px;top:632px;color:#000"><i>.</i></div>
<div class="t c" style="left:812px;top:632px;color:#800000">取标题</div>
<div class="t c" style="left:858px;top:632px;color:#000080"><i>(</i></div>
<div class="t c" style="left:865px;top:632px;color:#000">计次</div>
<div class="t c" style="left:898px;top:632px;color:#000080">－</div>
<div class="t c" style="left:917px;top:632px;color:#800000"><i>1</i></div>
<div class="t c" style="left:923px;top:632px;color:#000080"><i>,</i></div>
<div class="t c" style="left:938px;top:632px;color:#800000"><i>0</i></div>
<div class="t c" style="left:944px;top:632px;color:#000080"><i>)</i></div>
<div class="t c" style="left:532px;top:653px;color:#000">密码信息</div>
<div class="t c" style="left:592px;top:653px;color:#000080">＝</div>
<div class="t c" style="left:612px;top:653px;color:#000"><i>_</i>启动窗口</div>
<div class="t c" style="left:671px;top:653px;color:#000"><i>.</i></div>
<div class="t c" style="left:680px;top:653px;color:#000">超级列表框<i>_</i>游戏管理</div>
<div class="t c" style="left:804px;top:653px;color:#000"><i>.</i></div>
<div class="t c" style="left:812px;top:653px;color:#800000">取标题</div>
<div class="t c" style="left:858px;top:653px;color:#000080"><i>(</i></div>
<div class="t c" style="left:865px;top:653px;color:#000">计次</div>
<div class="t c" style="left:898px;top:653px;color:#000080">－</div>
<div class="t c" style="left:917px;top:653px;color:#800000"><i>1</i></div>
<div class="t c" style="left:923px;top:653px;color:#000080"><i>,</i></div>
<div class="t c" style="left:938px;top:653px;color:#800000"><i>1</i></div>
<div class="t c" style="left:944px;top:653px;color:#000080"><i>)</i></div>
<div class="t c" style="left:532px;top:674px;color:#000">账号信息</div>
<div class="t c" style="left:592px;top:674px;color:#000080">＝</div>
<div class="t c" style="left:612px;top:674px;color:#800000">文本<i>_</i>替换</div>
<div class="t c" style="left:678px;top:674px;color:#000080"><i>(</i></div>
<div class="t c" style="left:685px;top:674px;color:#000">账号信息</div>
<div class="t c" style="left:737px;top:674px;color:#000080"><i>, , , ,</i></div>
<div class="t c" style="left:805px;top:674px;color:#008080"><i>[TGP]</i></div>
<div class="t c" style="left:850px;top:674px;color:#000080"><i>,</i></div>
<div class="t c" style="left:889px;top:674px;color:#000080"><i>, , , , , , , ,</i></div>
<div class="t c" style="left:998px;top:674px;color:#000080"><i>)</i></div>
<div style="left:795px;top:669px;font:bold 17px/20px 'Liberation Serif';color:#008080;white-space:pre">“</div>
<div style="left:840px;top:669px;font:bold 17px/20px 'Liberation Serif';color:#008080;white-space:pre">”</div>
<div style="left:869px;top:669px;font:bold 17px/20px 'Liberation Serif';color:#008080;white-space:pre">“</div>
<div style="left:880px;top:669px;font:bold 17px/20px 'Liberation Serif';color:#008080;white-space:pre">”</div>
<div class="t c" style="left:532px;top:694px;color:#000">文本</div>
<div class="t c" style="left:565px;top:694px;color:#000080">＝</div>
<div class="t c" style="left:585px;top:694px;color:#000">文本</div>
<div class="t c" style="left:618px;top:694px;color:#000080">＋</div>
<div class="t c" style="left:638px;top:694px;color:#000">账号信息</div>
<div class="t c" style="left:698px;top:694px;color:#000080">＋</div>
<div class="t c" style="left:778px;top:694px;color:#000080">＋</div>
<div class="t c" style="left:798px;top:694px;color:#000">密码信息</div>
<div class="t c" style="left:858px;top:694px;color:#000080">＋</div>
<div class="t c" style="left:938px;top:694px;color:#000080">＋</div>
<div class="t c" style="left:958px;top:694px;color:#000"><i>_</i>启动窗口</div>
<div class="t c" style="left:1018px;top:694px;color:#000"><i>.</i></div>
<div class="t c" style="left:1026px;top:694px;color:#000">超级列表框<i>_</i>游戏管理</div>
<div class="t c" style="left:1151px;top:694px;color:#000"><i>.</i></div>
<div class="t c" style="left:1158px;top:694px;color:#800000">取标题</div>
<div class="t c" style="left:1204px;top:694px;color:#000080"><i>(</i></div>
<div class="t c" style="left:1211px;top:694px;color:#000">计次</div>
<div class="t c" style="left:1244px;top:694px;color:#000080">－</div>
<div class="t c" style="left:1263px;top:694px;color:#800000"><i>1</i></div>
<div class="t c" style="left:1269px;top:694px;color:#000080"><i>,</i></div>
<div class="t c" style="left:1284px;top:694px;color:#800000"><i>13</i></div>
<div class="t c" style="left:1297px;top:694px;color:#000080"><i>)</i></div>
<div class="t c" style="left:1311px;top:694px;color:#000080">＋</div>
<div class="t c" style="left:1331px;top:694px;color:#000080"><i>#</i></div>
<div class="t c" style="left:1337px;top:694px;color:#000080">换行符</div>
<div style="left:722px;top:690px;font:bold 17px/20px 'Liberation Serif';color:#008080;white-space:pre">“</div>
<div style="left:732px;top:699px;width:27px;height:2px;background:#008080"></div>
<div style="left:760px;top:690px;font:bold 17px/20px 'Liberation Serif';color:#008080;white-space:pre">”</div>
<div style="left:882px;top:690px;font:bold 17px/20px 'Liberation Serif';color:#008080;white-space:pre">“</div>
<div style="left:892px;top:699px;width:26px;height:2px;background:#008080"></div>
<div style="left:920px;top:690px;font:bold 17px/20px 'Liberation Serif';color:#008080;white-space:pre">”</div>
<div class="t c" style="left:532px;top:715px;color:#000">超级列表框<i>_</i>游戏管理</div>
<div class="t c" style="left:657px;top:715px;color:#000"><i>.</i></div>
<div class="t c" style="left:666px;top:715px;color:#800000">删除表项</div>
<div class="t c" style="left:724px;top:715px;color:#000080"><i>(</i></div>
<div class="t c" style="left:731px;top:715px;color:#000">计次</div>
<div class="t c" style="left:765px;top:715px;color:#000080">－</div>
<div class="t c" style="left:784px;top:715px;color:#800000"><i>1</i></div>
<div class="t c" style="left:790px;top:715px;color:#000080"><i>)</i></div>
<div class="t c" style="left:508px;top:756px;color:#0000ff">变量循环尾</div>
<div class="t c" style="left:580px;top:756px;color:#000080"><i>(</i></div>
<div class="t c" style="left:588px;top:756px;color:#000080"><i>)</i></div>
<svg style="left:0;top:0" width="1530" height="967"><path d="M469 800V807L473 803.5ZM473.5 800V807L477.5 803.5Z" fill="#000080"/></svg>
<div class="t c" style="left:483px;top:796px;color:#800000">写到文件</div>
<div class="t c" style="left:542px;top:796px;color:#000080"><i>(</i></div>
<div class="t c" style="left:563px;top:796px;color:#008080"><i>C:\Users\Administrator\Desktop\</i></div>
<div class="t c" style="left:790px;top:796px;color:#000080">＋</div>
<div class="t c" style="left:809px;top:796px;color:#800000">到文本</div>
<div class="t c" style="left:856px;top:796px;color:#000080"><i>(</i></div>
<div class="t c" style="left:864px;top:796px;color:#800000">腾讯</div>
<div class="t c" style="left:890px;top:796px;color:#000"><i>.</i></div>
<div class="t c" style="left:896px;top:796px;color:#800000">取时间</div>
<div class="t c" style="left:943px;top:796px;color:#000080"><i>())</i></div>
<div class="t c" style="left:970px;top:796px;color:#000080">＋</div>
<div class="t c" style="left:1002px;top:796px;color:#008080">登录异常账号</div>
<div class="t c" style="left:1082px;top:796px;color:#008080"><i>.txt</i></div>
<div class="t c" style="left:1121px;top:796px;color:#000080"><i>,</i></div>
<div class="t c" style="left:1136px;top:796px;color:#800000">到字节集</div>
<div class="t c" style="left:1195px;top:796px;color:#000080"><i>(</i></div>
<div class="t c" style="left:1202px;top:796px;color:#000">文本</div>
<div class="t c" style="left:1228px;top:796px;color:#000080"><i>))</i></div>
<div style="left:554px;top:792px;font:bold 17px/20px 'Liberation Serif';color:#008080;white-space:pre">“</div>
<div style="left:773px;top:792px;font:bold 17px/20px 'Liberation Serif';color:#008080;white-space:pre">”</div>
<div style="left:992px;top:792px;font:bold 17px/20px 'Liberation Serif';color:#008080;white-space:pre">“</div>
<div style="left:1111px;top:792px;font:bold 17px/20px 'Liberation Serif';color:#008080;white-space:pre">”</div>
</div></div>
<svg style="left:0;top:0" width="1530" height="967"><path d="M433 831L443 851H578L588 831" fill="#f0f0f0" stroke="none"/><path d="M433.5 831L443.5 850.5H578.5L588.5 831" fill="none" stroke="#000" stroke-width="1"/><path d="M443.5 850.5H578.5" stroke="#808080" stroke-width="1.6"/><path d="M578 831L588 851H681L691 831" fill="#f0f0f0" stroke="none"/><path d="M578.5 831L588.5 850.5H681.5L691.5 831" fill="none" stroke="#000" stroke-width="1"/><path d="M588.5 850.5H681.5" stroke="#808080" stroke-width="1.6"/><path d="M681 831L691 851H768L778 831" fill="#f0f0f0" stroke="none"/><path d="M681.5 831L691.5 850.5H768.5L778.5 831" fill="none" stroke="#000" stroke-width="1"/><path d="M691.5 850.5H768.5" stroke="#808080" stroke-width="1.6"/><path d="M768 831L778 851H870L880 831" fill="#f0f0f0" stroke="none"/><path d="M768.5 831L778.5 850.5H870.5L880.5 831" fill="none" stroke="#000" stroke-width="1"/><path d="M778.5 850.5H870.5" stroke="#808080" stroke-width="1.6"/><path d="M1000 831L1010 851H1072L1082 831" fill="#f0f0f0" stroke="none"/><path d="M1000.5 831L1010.5 850.5H1072.5L1082.5 831" fill="none" stroke="#000" stroke-width="1"/><path d="M1010.5 850.5H1072.5" stroke="#808080" stroke-width="1.6"/><path d="M1072 831L1082 851H1158L1168 831" fill="#f0f0f0" stroke="none"/><path d="M1072.5 831L1082.5 850.5H1158.5L1168.5 831" fill="none" stroke="#000" stroke-width="1"/><path d="M1082.5 850.5H1158.5" stroke="#808080" stroke-width="1.6"/><path d="M1158 831L1168 851H1260L1270 831" fill="#f0f0f0" stroke="none"/><path d="M1158.5 831L1168.5 850.5H1260.5L1270.5 831" fill="none" stroke="#000" stroke-width="1"/><path d="M1168.5 850.5H1260.5" stroke="#808080" stroke-width="1.6"/><path d="M1260 831L1270 851H1340L1350 831" fill="#f0f0f0" stroke="none"/><path d="M1260.5 831L1270.5 850.5H1340.5L1350.5 831" fill="none" stroke="#000" stroke-width="1"/><path d="M1270.5 850.5H1340.5" stroke="#808080" stroke-width="1.6"/><path d="M1340 831L1350 851H1420L1430 831" fill="#f0f0f0" stroke="none"/><path d="M1340.5 831L1350.5 850.5H1420.5L1430.5 831" fill="none" stroke="#000" stroke-width="1"/><path d="M1350.5 850.5H1420.5" stroke="#808080" stroke-width="1.6"/><path d="M870 831L880 851H1000L1010 831" fill="#fff" stroke="none"/><path d="M870.5 831L880.5 850.5H1000.5L1010.5 831" fill="none" stroke="#000" stroke-width="1"/><path d="M880.5 850.5H1000.5" stroke="#808080" stroke-width="1.6"/></svg>
<div style="left:431px;top:830px;width:1099px;height:2px;background:#808080"></div>
<div class="t" style="left:445px;top:834px;color:#808000;">［自定义数据类型表］</div>
<div class="t" style="left:587px;top:834px;color:#808000;">［全局变量表］</div>
<div class="t" style="left:694px;top:834px;color:#000;">输入法注入</div>
<div class="t" style="left:776px;top:834px;color:#808000;">［常量数据表］</div>
<div class="t" style="left:881px;top:834px;color:#000;font-weight:bold;letter-spacing:1.3px">窗口程序集主窗口</div>
<div class="t" style="left:1012px;top:834px;color:#000;">华夏操作</div>
<div class="t" style="left:1086px;top:834px;color:#000;">功能程序集</div>
<div class="t" style="left:1167px;top:834px;color:#808000;">［图片资源表］</div>
<div class="t" style="left:1274px;top:834px;color:#000080;"><i>_</i>老板配置</div>
<div class="t" style="left:1354px;top:834px;color:#000080;"><i>_</i>启动窗口</div>
<div style="left:47px;top:828px;width:77px;height:1px;background:#808080"></div>
<div style="left:192px;top:828px;width:231px;height:1px;background:#808080"></div>
<div style="left:50px;top:828px;width:74px;height:22px;border-bottom:2px solid #808080;border-left:1px solid #fff;border-right:1px solid #a0a0a0"></div>
<div style="left:124px;top:826px;width:68px;height:26px;background:#f0f0f0;border-left:1px solid #fff;border-right:2px solid #808080;border-bottom:2px solid #808080"></div>
<div style="left:192px;top:828px;width:63px;height:22px;border-bottom:2px solid #808080;border-right:2px solid #808080"></div>
<div class="t" style="left:80px;top:832px;color:#000;">支持库</div>
<div class="t" style="left:157px;top:835px;color:#000;">程序</div>
<div class="t" style="left:222px;top:832px;color:#000;">属性</div>
<svg style="left:0;top:0" width="300" height="967"><g transform="translate(56,831)"><path d="M0.5 11 L6 16.5 L16.5 10.5 V8 L6 14 L0.5 8.5Z" fill="#b0b0b0" stroke="#000"/><path d="M0.5 8.5 L6 14 L16.5 8 V5.5 L6 11.5 L0.5 6Z" fill="#d8d8d8" stroke="#000"/><path d="M0.5 6 L11 0.5 L16.5 5.5 L6 11.5Z" fill="#fff" stroke="#000"/></g><g transform="translate(133,835)"><path d="M.5 .5H8L10.5 3V13.5H.5Z" fill="#fff" stroke="#000"/><path d="M2.5 4.5H7M2.5 7H8.5M2.5 9.5H8.5M2.5 12H8.5" stroke="#000"/><path d="M13 9L17 5M13 9H15.5M13 9V6.5" stroke="#000"/></g><g transform="translate(197,831)"><path d="M.5 6L8 1L13 4V14.5H.5Z" fill="#fff" stroke="#000"/><path d="M2 8.5H12M2 11H12M7 6V14" stroke="#000"/><path d="M8 2L14 6" stroke="#000" stroke-width="1.5"/><rect x="15" y="1" width="2" height="8" fill="#0000c0"/></g></svg>
<div style="left:42px;top:858px;width:1488px;height:1px;background:#8a8a8a"></div>
<div style="left:42px;top:859px;width:1488px;height:1px;background:#fff"></div>
<div style="left:45px;top:864px;width:14px;height:13px;border-right:1px solid #a0a0a0;border-bottom:1px solid #a0a0a0;border-top:1px solid #fff;border-left:1px solid #fff"></div>
<div style="left:45px;top:878px;width:14px;height:14px;border-right:1px solid #a0a0a0;border-bottom:1px solid #a0a0a0;border-top:1px solid #fff;border-left:1px solid #fff"></div>
<svg style="left:0;top:0" width="70" height="967"><path d="M49 867.5L55 873.5M55 867.5L49 873.5" stroke="#000" stroke-width="1.8"/><rect x="49.5" y="882.5" width="6" height="6" fill="#fff" stroke="#000" stroke-width="1.3"/><rect x="49" y="882" width="7" height="2" fill="#000"/></svg>
<div style="left:52px;top:896px;width:1px;height:71px;background:#a0a0a0"></div>
<div style="left:53px;top:896px;width:1px;height:71px;background:#fff"></div>
<div style="left:62px;top:887px;width:1468px;height:80px;border-top:1px solid #fafafa;border-left:1px solid #fafafa"></div>
<div style="left:63px;top:865px;width:1467px;height:24px;background:#f0f0f0"></div>
<div style="left:128px;top:864px;width:66px;height:24px;background:#f0f0f0;border-top:1px solid #fff;border-left:1px solid #fff"></div>
<div style="left:194px;top:864px;width:1px;height:24px;background:#808080"></div>
<div style="left:195px;top:864px;width:1px;height:24px;background:#fff"></div>
<div style="left:269px;top:864px;width:1px;height:24px;background:#808080"></div>
<div style="left:270px;top:864px;width:1px;height:24px;background:#fff"></div>
<div style="left:347px;top:864px;width:1px;height:24px;background:#808080"></div>
<div style="left:348px;top:864px;width:1px;height:24px;background:#fff"></div>
<div style="left:425px;top:864px;width:1px;height:24px;background:#808080"></div>
<div style="left:426px;top:864px;width:1px;height:24px;background:#fff"></div>
<div style="left:496px;top:864px;width:1px;height:24px;background:#808080"></div>
<div style="left:497px;top:864px;width:1px;height:24px;background:#fff"></div>
<div style="left:567px;top:864px;width:1px;height:24px;background:#808080"></div>
<div style="left:568px;top:864px;width:1px;height:24px;background:#fff"></div>
<div style="left:658px;top:864px;width:1px;height:24px;background:#808080"></div>
<div style="left:659px;top:864px;width:1px;height:24px;background:#fff"></div>
<div class="t" style="left:95px;top:870px;color:#000;">提示</div>
<div class="t" style="left:160px;top:870px;color:#000;">输出</div>
<div class="t" style="left:224px;top:870px;color:#000;">调用表</div>
<div class="t" style="left:302px;top:870px;color:#000;">监视表</div>
<div class="t" style="left:379px;top:870px;color:#000;">变量表</div>
<div class="t" style="left:457px;top:870px;color:#000;">搜寻<i>1</i></div>
<div class="t" style="left:528px;top:870px;color:#000;">搜寻<i>2</i></div>
<div class="t" style="left:599px;top:870px;color:#000;">剪辑历史</div>
<svg style="left:0;top:0" width="700" height="967"><path d="M75.5 872.5Q75.5 868.5 80.5 868.5Q85.5 868.5 85.5 872.5Q85.5 875 83 876.5Q81.5 877.5 81.5 880" fill="none" stroke="#000" stroke-width="4.6"/><path d="M75.5 872.5Q75.5 868.5 80.5 868.5Q85.5 868.5 85.5 872.5Q85.5 875 83 876.5Q81.5 877.5 81.5 880" fill="none" stroke="#ffff00" stroke-width="2.2"/><rect x="79" y="881.5" width="5" height="4" rx="1" fill="#ffff00" stroke="#000" stroke-width="1.2"/><g transform="translate(137,866)"><rect x=".5" y=".5" width="13" height="15" fill="#fff" stroke="#000"/><rect x="1" y="1" width="12" height="2" fill="#0000ff"/><path d="M3 6H9M3 8.5H8M3 11H7" stroke="#000"/></g><g transform="translate(202,868)" stroke="#000"><path d="M1.5 1V12M5.5 1V12M9.5 1V12"/><path d="M0 3.5L1.5 1L3 3.5M4 3.5L5.5 1L7 3.5M8 3.5L9.5 1L11 3.5M0 9.5L1.5 12L3 9.5M4 9.5L5.5 12L7 9.5M8 9.5L9.5 12L11 9.5" fill="none"/><path d="M0 6.5H11" stroke="#0000c0" stroke-dasharray="1.5 1"/></g><g transform="translate(277,866)"><circle cx="7" cy="7" r="5.5" fill="#fff" stroke="#000" stroke-width="1.3"/><path d="M11 11L16 16" stroke="#000" stroke-width="2"/></g><g transform="translate(355,870)"><path d="M0 5L4.5 0.5L9 5L4.5 9.5Z" fill="#e8e800" stroke="#000"/><path d="M8 5L12.5 0.5L17 5L12.5 9.5Z" fill="#fff" stroke="#000"/></g><g transform="translate(433,867)"><rect x=".5" y=".5" width="12" height="13" fill="#fff" stroke="#000"/><path d="M2.5 3H10M2.5 6H7M2.5 9H7" stroke="#000"/><circle cx="9" cy="9" r="3" fill="none" stroke="#000"/><path d="M11 11L15 15" stroke="#000" stroke-width="1.5"/></g><g transform="translate(503,867)"><rect x=".5" y=".5" width="12" height="13" fill="#fff" stroke="#000"/><path d="M2.5 3H10M2.5 6H7M2.5 9H7" stroke="#000"/><circle cx="9" cy="9" r="3" fill="none" stroke="#000"/><path d="M11 11L15 15" stroke="#000" stroke-width="1.5"/></g><g transform="translate(578,869)"><rect x=".5" y=".5" width="11" height="13" fill="#fff" stroke="#000"/><path d="M2.5 3.5H9M2.5 6.5H7M2.5 9.5H9" stroke="#000"/></g></svg>
<svg style="left:0;top:0" width="700" height="70"><g stroke="#000" fill="none"><path d="M58.5 -4V3.5H70.5V-4M61 1H68"/><path d="M80.5 -4V3.5H90L95 -1"/></g><rect x="105" y="-3" width="16" height="7" fill="#000"/><path d="M108 -3V3M111 -3V3M115 -3V3M118 -3V3" stroke="#777" stroke-width="1.2"/><path d="M130.5 0V6" stroke="#a3a3a3"/><path d="M144 -3Q143 3 146 3Q148 3 148 -1M150 -1Q150 3 152 3Q154 3 153 -3" stroke="#000" stroke-width="1.3" fill="none"/><path d="M165 -1H172" stroke="#000" stroke-width="2"/><rect x="172.5" y="-3.5" width="9" height="7" fill="#fff" stroke="#0000a0"/><path d="M175 1H179" stroke="#000"/><rect x="192" y="-3" width="8" height="5" fill="#808000" stroke="#000"/><rect x="198.5" y="-3.5" width="9" height="7" fill="#fff" stroke="#0000a0"/><path d="M201 1H205" stroke="#000"/><path d="M220 0.5H223" stroke="#d0d0d0"/><path d="M230 0.5H233" stroke="#d0d0d0"/><path d="M243 0.5H246" stroke="#d0d0d0"/><path d="M252 0.5H255" stroke="#d0d0d0"/><path d="M266.5 0V6" stroke="#a3a3a3"/><path d="M275.5 -3V3.5H288M288 0L293 4.5" stroke="#000" stroke-width="1.4" fill="none"/><path d="M301.5 0V6M307.5 0V6" stroke="#a3a3a3"/><path d="M312.5 -3V4.5H327.5V-3M320 -3V4.5" stroke="#000" stroke-width="1.2" fill="none"/><path d="M332 -3V5.5" stroke="#000" stroke-width="1.2"/><rect x="340" y="-3" width="13" height="7" fill="#000"/><path d="M341 0.5H352" stroke="#fff" stroke-width="1.5"/><rect x="362" y="-3" width="15" height="7" fill="#000"/><path d="M366 1H369M371 1H375" stroke="#fff" stroke-width="1.5"/><path d="M364 -3V2" stroke="#fff"/><path d="M386.5 0V6" stroke="#a3a3a3"/><path d="M400 -3H405L401 3Z" fill="#000"/><rect x="425" y="-2" width="9" height="3" fill="#b0b0b0"/><path d="M447 -1Q447 4 452 4L455 1H462V-3" stroke="#b0b0b0" stroke-width="1.5" fill="none"/><path d="M476 -3Q474 3 477 3M482 -3Q485 3 482 3" stroke="#b0b0b0" stroke-width="1.4" fill="none"/><path d="M502 -3Q500 3 503 3M508 -3Q511 3 508 3" stroke="#b0b0b0" stroke-width="1.4" fill="none"/><path d="M526 -3Q524 3 527 3M532 -3Q535 3 532 3" stroke="#b0b0b0" stroke-width="1.4" fill="none"/><path d="M557 -3Q555 3 558 3M563 -3Q566 3 563 3" stroke="#b0b0b0" stroke-width="1.4" fill="none"/><path d="M578 -3L581 3H588L591 -3" stroke="#b0b0b0" stroke-width="1.2" fill="none"/><path d="M599.5 0V6" stroke="#a3a3a3"/><rect x="613" y="-3" width="13" height="8" fill="#000"/><path d="M615 1H617M620 1H623" stroke="#fff" stroke-width="1.3"/><g stroke="#a3a3a3" fill="none" stroke-width="1.3"><rect x="54.5" y="15.5" width="14" height="14"/><path d="M57 18.5H66"/><rect x="57.5" y="22.5" width="3" height="4"/><rect x="62.5" y="22.5" width="3" height="4"/><path d="M79.5 14V33M190.5 14V33M352.5 14V33"/><path d="M88.5 14V32"/><rect x="90.5" y="17.5" width="7" height="4"/><circle cx="92.5" cy="27" r="2"/><path d="M99 19.5H104M99 27H104"/><path d="M101 17.5L99 19.5L101 21.5M101 25L99 27L101 29"/><path d="M129.5 14V32"/><rect x="119.5" y="17.5" width="7" height="4"/><circle cx="125" cy="27" r="2"/><path d="M113 19.5H118M113 27H118"/><path d="M116 17.5L118 19.5L116 21.5M116 25L118 27L116 29"/><path d="M139 14.5H155"/><circle cx="142" cy="20" r="2"/><rect x="147.5" y="17.5" width="7" height="4"/><path d="M142 25V32M150 25V32M140 27L142 25L144 27M148 27L150 25L152 27"/><path d="M164 32.5H182"/><circle cx="167.5" cy="27" r="2"/><rect x="171.5" y="25.5" width="9" height="4"/><path d="M167.5 15V22M176 15V22M165.5 20L167.5 22L169.5 20M174 20L176 22L178 20"/><rect x="198.5" y="15.5" width="17" height="15"/><rect x="205.5" y="18.5" width="3" height="9"/><path d="M199 23H204M209 23H215"/><rect x="224.5" y="15.5" width="17" height="15"/><rect x="227.5" y="21.5" width="11" height="3"/><path d="M233 16V21M233 25V30"/><path d="M253 20.5H266M255 28.5H265M254 28.5V31.5H266V28.5M256 23V28M262 23V28M258 23.5H264"/><path d="M259 16V20M263 17L259 20"/><rect x="275.5" y="17.5" width="4" height="13"/><rect x="281.5" y="15.5" width="3" height="15"/><path d="M287 15V23M287 24V31M285 21L287 23L289 21M285 26L287 24L289 26"/><path d="M301 17H303V31H301M318 17H316V31H318M304 24H315M306 22L304 24L306 26M313 22L315 24L313 26"/><path d="M328 15V17H342V15M328 32V30H342V32M335 18V29M333 20L335 18L337 20M333 27L335 29L337 27"/><rect x="362.5" y="18.5" width="16" height="10"/><path d="M364 23.5H377M366 21L364 23.5L366 26M375 21L377 23.5L375 26"/><rect x="391.5" y="15.5" width="9" height="16"/><path d="M396 17V30M393.5 19.5L396 17L398.5 19.5M393.5 27.5L396 30L398.5 27.5"/><rect x="413.5" y="15.5" width="16" height="16"/><path d="M415 23.5H428M421.5 17V30M417 21.5L415 23.5L417 25.5M426 21.5L428 23.5L426 25.5M419.5 19L421.5 17L423.5 19M419.5 28L421.5 30L423.5 28"/></g></svg></body></html>
